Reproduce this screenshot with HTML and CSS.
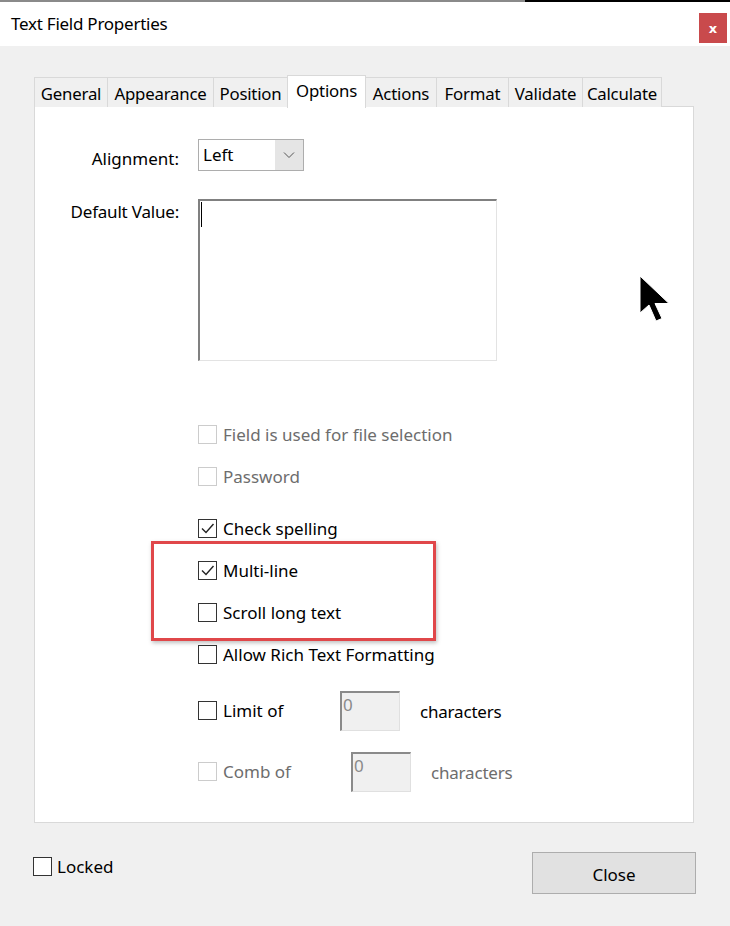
FILE: index.html
```html
<!DOCTYPE html>
<html lang="en">
<head>
<meta charset="utf-8">
<title>Text Field Properties</title>
<link rel="stylesheet" href="styles.css">
</head>
<body>
<div class="strip"><span class="strip-grey"></span><span class="strip-black"></span></div>
<header class="titlebar">
  <span class="title">Text Field Properties</span>
  <button class="xbtn" type="button">x</button>
</header>
<main class="dialog">
  <nav class="tabs">
    <span class="tab t-general">General</span>
    <span class="tab t-appearance">Appearance</span>
    <span class="tab t-position">Position</span>
    <span class="tab t-options active">Options</span>
    <span class="tab t-actions">Actions</span>
    <span class="tab t-format">Format</span>
    <span class="tab t-validate">Validate</span>
    <span class="tab t-calculate">Calculate</span>
  </nav>
  <section class="panel">
    <div class="form">
      <label class="lbl lbl-align">Alignment:</label>
      <div class="select">
        <span class="select-val">Left</span>
        <span class="select-btn"><svg width="12" height="8" viewBox="0 0 12 8"><path d="M1 1.5 L6 6.5 L11 1.5" fill="none" stroke="#555" stroke-width="1"/></svg></span>
      </div>
      <label class="lbl lbl-default">Default Value:</label>
      <div class="textarea"><span class="caret"></span></div>
    </div>

    <div class="checks">
      <div class="row r-file disabled"><span class="cb"></span><span class="txt">Field is used for file selection</span></div>
      <div class="row r-pass disabled"><span class="cb"></span><span class="txt">Password</span></div>
      <div class="row r-spell"><span class="cb"><svg width="17" height="17" viewBox="0 0 17 17"><path d="M3 8.5 L7 12.5 L14.5 4" fill="none" stroke="#222" stroke-width="1.4"/></svg></span><span class="txt">Check spelling</span></div>
      <div class="annot">
        <div class="row r-multi"><span class="cb"><svg width="17" height="17" viewBox="0 0 17 17"><path d="M3 8.5 L7 12.5 L14.5 4" fill="none" stroke="#222" stroke-width="1.4"/></svg></span><span class="txt">Multi-line</span></div>
        <div class="row r-scroll"><span class="cb"></span><span class="txt">Scroll long text</span></div>
      </div>
      <div class="row r-rich"><span class="cb"></span><span class="txt">Allow Rich Text Formatting</span></div>
      <div class="row r-limit"><span class="cb"></span><span class="txt w-limit">Limit of</span><span class="num">0</span><span class="chars">characters</span></div>
      <div class="row r-comb disabled"><span class="cb"></span><span class="txt w-comb">Comb of</span><span class="num">0</span><span class="chars">characters</span></div>
    </div>

    <svg class="pointer" width="32" height="48" viewBox="0 0 32 48"><path d="M1 1 L1 38 L10 30 L17 46 L23 43.5 L16 28.5 L30 28.5 Z" fill="#000" stroke="#fff" stroke-width="1"/></svg>
  </section>
  <footer class="footer">
    <div class="row locked"><span class="cb"></span><span class="txt">Locked</span></div>
    <button class="close" type="button">Close</button>
  </footer>
</main>
</body>
</html>
```
FILE: styles.css
```css
*, *::before, *::after { box-sizing: border-box; }
html, body { margin: 0; padding: 0; }
body {
  width: 730px;
  height: 926px;
  background: #f0f0f0;
  font-family: "Noto Sans", "Open Sans", "DejaVu Sans", sans-serif;
  font-size: 17px;
  color: #000;
  overflow: hidden;
}
.strip { display: flex; height: 2px; background: #fff; }
.strip-grey { width: 525px; background: #8a8a8a; }
.strip-black { flex: 1; background: #000; }

.titlebar {
  height: 44px;
  background: #fff;
  display: flex;
  align-items: center;
  justify-content: space-between;
  padding: 0 3px 0 11px;
}
.title {
  font-size: 17px;
  letter-spacing: -0.25px;
  margin-top: -2px;
}
.xbtn {
  width: 28px;
  height: 30px;
  border: none;
  background: #c94a4c;
  color: #fff;
  font-family: "DejaVu Sans", sans-serif;
  font-weight: bold;
  font-size: 13px;
  padding: 0;
  margin-top: 8px;
}

.dialog { padding: 29px 36px 0 34px; }

.tabs {
  display: flex;
  align-items: flex-end;
  height: 32px;
  position: relative;
  z-index: 1;
}
.tab {
  height: 30px;
  border: 1px solid #d9d9d9;
  border-bottom: none;
  margin-right: -1px;
  background: #f0f0f0;
  display: flex;
  align-items: center;
  justify-content: center;
  font-size: 16.8px;
  letter-spacing: -0.2px;
  padding-top: 1px;
}
.tab.active {
  height: 33px;
  background: #fff;
  padding-top: 0;
  padding-bottom: 4px;
  margin-bottom: -1px;
}
.t-general { width: 74px; }
.t-appearance { width: 107px; }
.t-position { width: 75px; }
.t-options { width: 79px; }
.t-actions { width: 72px; }
.t-format { width: 73px; }
.t-validate { width: 75px; }
.t-calculate { width: 80px; }

.panel {
  position: relative;
  height: 717px;
  background: #fff;
  border: 1px solid #d9d9d9;
  margin-top: -1px;
  padding-top: 32px;
}

.form {
  display: grid;
  grid-template-columns: 144px 299px;
  column-gap: 19px;
  row-gap: 28px;
}
.lbl { justify-self: end; }
.lbl-align { align-self: center; margin-top: 6px; }
.lbl-default { padding-top: 1px; letter-spacing: -0.2px; }

.select {
  width: 106px;
  height: 32px;
  border: 1px solid #adadad;
  display: flex;
  background: #fff;
}
.select-val { flex: 1; padding: 3px 0 0 4px; }
.select-btn {
  width: 28px;
  background: #e5e5e5;
  display: flex;
  align-items: center;
  justify-content: center;
}
.textarea {
  height: 162px;
  border-top: 2px solid #808080;
  border-left: 2px solid #808080;
  border-right: 1px solid #e3e3e3;
  border-bottom: 1px solid #e3e3e3;
  padding: 1px 0 0 1px;
}
.caret { display: block; width: 1px; height: 25px; background: #000; }

.checks {
  padding-left: 163px;
  margin-top: 64px;
  display: flex;
  flex-direction: column;
}
.row {
  display: flex;
  align-items: center;
  height: 19px;
}
.cb {
  width: 19px;
  height: 19px;
  border: 1px solid #333;
  background: #fff;
  flex: none;
  display: flex;
  align-items: center;
  justify-content: center;
}
.txt { margin-left: 6px; white-space: nowrap; }
.disabled .cb { border-color: #cccccc; }
.disabled .txt, .disabled .chars { color: #6d6d6d; }

.r-pass { margin-top: 23px; }
.r-spell { margin-top: 33px; }
.annot { position: relative; margin-top: 23px; }
.annot::after {
  content: "";
  position: absolute;
  left: -47px;
  top: -20px;
  width: 285px;
  height: 100px;
  border: 3px solid #e0474a;
  box-shadow: 1px 2px 4px rgba(0,0,0,0.25);
  pointer-events: none;
}
.r-scroll { margin-top: 23px; }
.r-rich { margin-top: 23px; }
.r-limit { margin-top: 37px; }
.r-comb { margin-top: 42px; }

.num {
  width: 60px;
  height: 40px;
  flex: none;
  background: #f0f0f0;
  border-top: 2px solid #8a8a8a;
  border-left: 2px solid #8a8a8a;
  border-right: 1px solid #e0e0e0;
  border-bottom: 1px solid #e0e0e0;
  color: #8a8a8a;
  padding: 2px 0 0 1px;
  align-self: center;
  line-height: 20px;
}
.w-limit { width: 117px; }
.w-comb { width: 128px; }
.chars { margin-left: 20px; margin-top: 2px; letter-spacing: -0.2px; }

.pointer { position: absolute; left: 604px; top: 168px; }

.footer {
  display: flex;
  justify-content: space-between;
  align-items: flex-start;
  padding-top: 29px;
  margin-left: -1px;
}
.locked { margin-top: 5px; }
.locked .txt { margin-left: 5px; font-size: 17px; }
.close {
  width: 164px;
  height: 42px;
  background: #e1e1e1;
  border: 1px solid #adadad;
  font-family: "Noto Sans", "Open Sans", sans-serif;
  font-size: 17px;
  color: #000;
  padding: 2px 0 0;
  margin-right: -2px;
}
```
